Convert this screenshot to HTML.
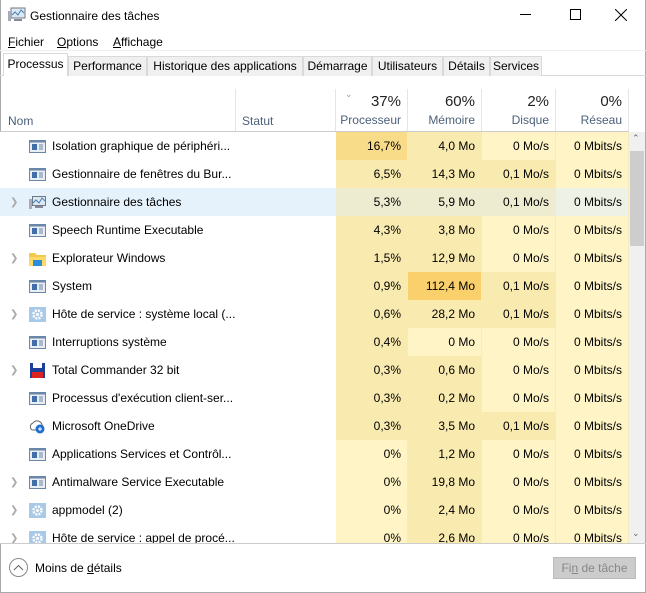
<!DOCTYPE html>
<html><head><meta charset="utf-8"><style>
*{margin:0;padding:0;box-sizing:border-box}
body{width:646px;height:593px;overflow:hidden;background:#fff;font-family:"Liberation Sans",sans-serif;font-size:12px;color:#000;position:relative}
.a{position:absolute;white-space:nowrap}
.tab{position:absolute;top:56px;height:20px;background:#f0f0f0;border:1px solid #d9d9d9;border-bottom:none;line-height:18px;text-align:center;font-size:12px}
.hd{position:absolute;top:89px;height:43px;border-right:1px solid #e5e5e5;text-align:right;padding-right:6px}
.row{position:absolute;left:0;width:629px;height:28px}
.c{position:absolute;top:0;height:28px;line-height:29px;text-align:right;padding-right:6px;border-right:1px solid #f5ebc0}
.nm{position:absolute;left:52px;top:0;line-height:29px;font-size:12px}
.ex{position:absolute;left:10px;top:9px;color:#aaa;font-size:10px}
.ic{position:absolute;left:29px;top:7px;width:17px;height:15px}
</style></head><body>
<div class="a" style="left:0;top:0;width:646px;height:593px;border:1px solid #aaa;border-top:none"></div>
<svg class="a" style="left:8px;top:7px" width="18" height="16"><rect x="3" y="1" width="14" height="10" fill="#dfe7ee" stroke="#6b7a89"/><polyline points="4,8 7,5 10,8 13,3 16,6" fill="none" stroke="#3a7fc0"/><rect x="0" y="4" width="3" height="10" fill="#aab"/><rect x="6" y="12" width="8" height="2" fill="#889"/></svg>
<div class="a" style="left:30px;top:9px;font-size:12px">Gestionnaire des tâches</div>
<div class="a" style="left:520px;top:14px;width:11px;height:1px;background:#000"></div>
<div class="a" style="left:570px;top:9px;width:11px;height:11px;border:1px solid #000"></div>
<svg class="a" style="left:615px;top:9px" width="12" height="12"><path d="M0 0L12 12M12 0L0 12" stroke="#000"/></svg>
<div class="a" style="left:8px;top:35px"><u>F</u>ichier</div>
<div class="a" style="left:57px;top:35px"><u>O</u>ptions</div>
<div class="a" style="left:113px;top:35px"><u>A</u>ffichage</div>
<div class="a" style="left:0;top:50px;width:646px;height:1px;background:#eee"></div>
<div class="a" style="left:0;top:75px;width:646px;height:1px;background:#d9d9d9"></div>
<div class="tab" style="left:68px;width:79px">Performance</div>
<div class="tab" style="left:147px;width:156px">Historique des applications</div>
<div class="tab" style="left:303px;width:69px">Démarrage</div>
<div class="tab" style="left:372px;width:71px">Utilisateurs</div>
<div class="tab" style="left:443px;width:47px">Détails</div>
<div class="tab" style="left:490px;width:52px">Services</div>
<div class="tab" style="left:3px;top:53px;height:23px;width:65px;background:#fff;line-height:20px">Processus</div>
<div class="hd" style="left:0;width:236px;text-align:left;padding-left:8px;color:#4c607a"><span style="position:absolute;top:25px">Nom</span></div>
<div class="hd" style="left:236px;width:100px;text-align:left;padding-left:6px;color:#4c607a"><span style="position:absolute;top:25px">Statut</span></div>
<div class="hd" style="left:336px;width:72px"><div style="font-size:15px;margin-top:4px;color:#222">37%</div><div style="color:#4c607a;margin-top:3px">Processeur</div><span style="position:absolute;left:9px;top:0;color:#999;font-size:9px">&#8964;</span></div>
<div class="hd" style="left:408px;width:74px"><div style="font-size:15px;margin-top:4px;color:#222">60%</div><div style="color:#4c607a;margin-top:3px">Mémoire</div></div>
<div class="hd" style="left:482px;width:74px"><div style="font-size:15px;margin-top:4px;color:#222">2%</div><div style="color:#4c607a;margin-top:3px">Disque</div></div>
<div class="hd" style="left:556px;width:73px"><div style="font-size:15px;margin-top:4px;color:#222">0%</div><div style="color:#4c607a;margin-top:3px">Réseau</div></div>
<div class="a" style="left:0;top:131px;width:629px;height:1px;background:#ccc"></div>
<div class="a" style="left:0;top:132px;width:629px;height:411px;overflow:hidden">
<div id="rows"></div>
</div>
<div class="a" style="left:629px;top:132px;width:16px;height:411px;background:#f0f0f0"></div>
<div class="a" style="left:630px;top:151px;width:14px;height:95px;background:#cdcdcd"></div>
<div class="a" style="left:632px;top:133px;font-size:9px;color:#666">&#8963;</div>
<div class="a" style="left:632px;top:528px;font-size:9px;color:#666">&#8964;</div>
<div class="a" style="left:0;top:543px;width:646px;height:1px;background:#ccc"></div>
<div class="a" style="left:9px;top:558px;width:19px;height:19px;border:1px solid #888;border-radius:50%"></div>
<svg class="a" style="left:13px;top:564px" width="11" height="7"><path d="M1 6L5.5 1.5L10 6" fill="none" stroke="#666"/></svg>
<div class="a" style="left:35px;top:561px">Moins de <u>d</u>étails</div>
<div class="a" style="left:553px;top:557px;width:83px;height:22px;background:#ccc;border:1px solid #bbb;color:#888;text-align:center;line-height:20px">Fi<u>n</u> de tâche</div>
<script>
var L='#fff4c6',M='#f9ebb0',H='#f9dc8a',O='#f9d06c';
var d=[
['Isolation graphique de périphéri...',0,'w',['16,7%',H],['4,0 Mo',M],['0 Mo/s',L],['0 Mbits/s',L]],
['Gestionnaire de fenêtres du Bur...',0,'w',['6,5%',M],['14,3 Mo',M],['0,1 Mo/s',M],['0 Mbits/s',L]],
['Gestionnaire des tâches',1,'t',['5,3%','#eeecd0'],['5,9 Mo','#eeecd0'],['0,1 Mo/s','#eeecd0'],['0 Mbits/s','#eef2e6']],
['Speech Runtime Executable',0,'w',['4,3%',M],['3,8 Mo',M],['0 Mo/s',L],['0 Mbits/s',L]],
['Explorateur Windows',1,'f',['1,5%',M],['12,9 Mo',M],['0 Mo/s',L],['0 Mbits/s',L]],
['System',0,'w',['0,9%',M],['112,4 Mo',O],['0,1 Mo/s',M],['0 Mbits/s',L]],
['Hôte de service : système local (...',1,'g',['0,6%',M],['28,2 Mo',M],['0,1 Mo/s',M],['0 Mbits/s',L]],
['Interruptions système',0,'w',['0,4%',M],['0 Mo',L],['0 Mo/s',L],['0 Mbits/s',L]],
['Total Commander 32 bit',1,'d',['0,3%',M],['0,6 Mo',M],['0 Mo/s',L],['0 Mbits/s',L]],
['Processus d\'exécution client-ser...',0,'w',['0,3%',M],['0,2 Mo',M],['0 Mo/s',L],['0 Mbits/s',L]],
['Microsoft OneDrive',0,'o',['0,3%',M],['3,5 Mo',M],['0,1 Mo/s',M],['0 Mbits/s',L]],
['Applications Services et Contrôl...',0,'w',['0%',L],['1,2 Mo',M],['0 Mo/s',L],['0 Mbits/s',L]],
['Antimalware Service Executable',1,'w',['0%',L],['19,8 Mo',M],['0 Mo/s',L],['0 Mbits/s',L]],
['appmodel (2)',1,'g',['0%',L],['2,4 Mo',M],['0 Mo/s',L],['0 Mbits/s',L]],
['Hôte de service : appel de procé...',1,'g',['0%',L],['2,6 Mo',M],['0 Mo/s',L],['0 Mbits/s',L]]];
var ic={
w:'<svg class="ic" viewBox="0 0 17 15"><rect x="0.5" y="1.5" width="16" height="12" fill="#e8eef4" stroke="#6a86a8"/><rect x="0.5" y="1.5" width="16" height="2" fill="#6a86a8"/><rect x="3" y="5" width="5" height="6" fill="#3f6ea8"/><path d="M10 6h4M10 8h4M10 10h4" stroke="#6a86a8"/></svg>',
t:'<svg class="ic" viewBox="0 0 17 15"><rect x="3.5" y="1.5" width="13" height="9" fill="#dfe7ee" stroke="#6b7a89"/><polyline points="4,8 7,5 10,8 13,3 16,6" fill="none" stroke="#3a7fc0"/><rect x="0" y="4" width="3" height="10" fill="#aab"/><rect x="6" y="11" width="8" height="2" fill="#889"/></svg>',
f:'<svg class="ic" viewBox="0 0 17 15"><path d="M0 2h6l2 2h9v11H0z" fill="#f2c94c"/><rect x="0" y="6" width="17" height="9" fill="#ffd966"/><rect x="4" y="9" width="9" height="6" fill="#2a8fd6"/></svg>',
g:'<svg class="ic" viewBox="0 0 17 15"><rect x="0" y="0" width="17" height="15" fill="#a9c9e8"/><circle cx="8.5" cy="7.5" r="4" fill="none" stroke="#fff" stroke-width="2.5" stroke-dasharray="2 1.2"/><circle cx="8.5" cy="7.5" r="1.5" fill="#fff"/></svg>',
d:'<svg class="ic" viewBox="0 0 17 15"><rect x="1" y="0" width="15" height="15" fill="#1c3f9a"/><rect x="4" y="0" width="9" height="5" fill="#fff"/><rect x="3" y="9" width="11" height="6" fill="#d22"/></svg>',
o:'<svg class="ic" viewBox="0 0 17 15"><path d="M3 11a4 4 0 0 1 1-7a5 5 0 0 1 9 2a3 3 0 0 1 0 5z" fill="#fff" stroke="#666"/><circle cx="11" cy="10" r="4.5" fill="#1e6fd0"/><path d="M9 10h4M11 8v4" stroke="#fff"/></svg>'};
var cols=[[336,72],[408,74],[482,74],[556,73]],h='';
d.forEach(function(r,i){
 h+='<div class="row" style="top:'+(i*28)+'px;background:'+(i==2?'#e5f1fb':'#fff')+'">';
 if(r[1])h+='<span class="ex">&#10095;</span>';
 h+=ic[r[2]]+'<span class="nm">'+r[0]+'</span>';
 for(var k=0;k<4;k++)h+='<div class="c" style="left:'+cols[k][0]+'px;width:'+cols[k][1]+'px;background:'+r[3+k][1]+'">'+r[3+k][0]+'</div>';
 h+='</div>';});
document.getElementById('rows').outerHTML=h;
</script>
</body></html>
